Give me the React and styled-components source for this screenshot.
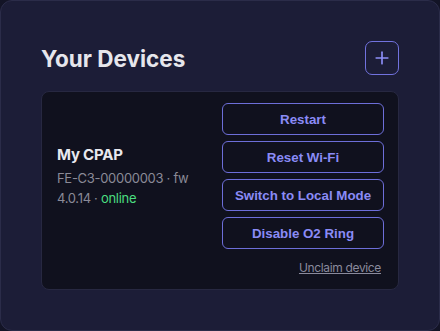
import styled, { createGlobalStyle } from 'styled-components'
import { Plus } from 'lucide-react'

const GlobalStyle = createGlobalStyle`
  html, body {
    margin: 0;
    padding: 0;
    background: #131426;
  }
  body {
    font-family: 'Inter', 'Noto Sans', sans-serif;
  }
`

const devices = [
  {
    id: 'FE-C3-00000003',
    name: 'My CPAP',
    fw: '4.0.14',
    online: true,
    actions: ['Restart', 'Reset Wi-Fi', 'Switch to Local Mode', 'Disable O2 Ring'],
  },
]

const App = () => {
  return (
    <>
      <GlobalStyle />
      <Panel>
        <Header>
          <Title>Your Devices</Title>
          <AddButton aria-label="Add device">
            <Plus size={20} strokeWidth={2} />
          </AddButton>
        </Header>
        {devices.map((device) => (
          <Card key={device.id}>
            <Row>
              <Info>
                <Name>{device.name}</Name>
                <Meta>
                  {device.id} · fw {device.fw} ·{' '}
                  <Status $online={device.online}>{device.online ? 'online' : 'offline'}</Status>
                </Meta>
              </Info>
              <Actions>
                {device.actions.map((action) => (
                  <ActionButton key={action}>{action}</ActionButton>
                ))}
              </Actions>
            </Row>
            <Footer>
              <UnclaimLink href="#">Unclaim device</UnclaimLink>
            </Footer>
          </Card>
        ))}
      </Panel>
    </>
  )
}

const Panel = styled.div`
  box-sizing: border-box;
  width: 440px;
  height: 331px;
  padding: 40px;
  background-color: #1c1d37;
  border: 1px solid #2b2c49;
  border-radius: 12px;
`

const Header = styled.div`
  display: flex;
  align-items: center;
  justify-content: space-between;
  margin-bottom: 16px;
`

const Title = styled.h2`
  margin: 0;
  font-size: 22.5px;
  font-weight: 700;
  color: #e6e6ec;
`

const AddButton = styled.button`
  display: flex;
  align-items: center;
  justify-content: center;
  width: 34px;
  height: 34px;
  padding: 0;
  background: transparent;
  color: #8d8ef8;
  border: 1px solid #7172de;
  border-radius: 7px;
  cursor: pointer;
`

const Card = styled.div`
  padding: 11px 14px 12px 15px;
  background-color: #10111e;
  border: 1px solid #272841;
  border-radius: 8px;
`

const Row = styled.div`
  display: flex;
  align-items: center;
  gap: 16px;
`

const Info = styled.div`
  flex: 1;
  min-width: 0;
`

const Name = styled.div`
  font-size: 15px;
  font-weight: 700;
  color: #e8e8ee;
  letter-spacing: -0.2px;
  margin-bottom: 4px;
`

const Meta = styled.div`
  font-size: 13px;
  line-height: 20px;
  letter-spacing: -0.3px;
  color: #8a8a97;
`

const Status = styled.span`
  color: ${(p) => (p.$online ? '#4ade80' : '#f87171')};
`

const Actions = styled.div`
  display: flex;
  flex-direction: column;
  gap: 6px;
  width: 162px;
`

const ActionButton = styled.button`
  height: 32px;
  padding: 0 6px;
  background: transparent;
  color: #8a8bf6;
  border: 1px solid #6d6ed9;
  border-radius: 6px;
  font-family: 'Liberation Sans', Arial, sans-serif;
  font-size: 13.33px;
  font-weight: 700;
  cursor: pointer;
`

const Footer = styled.div`
  display: flex;
  justify-content: flex-end;
  margin-top: 10px;
  padding-right: 3px;
`

const UnclaimLink = styled.a`
  font-size: 12px;
  line-height: 18px;
  letter-spacing: -0.35px;
  color: #8a8a9c;
  text-decoration: underline;
`

export default App
